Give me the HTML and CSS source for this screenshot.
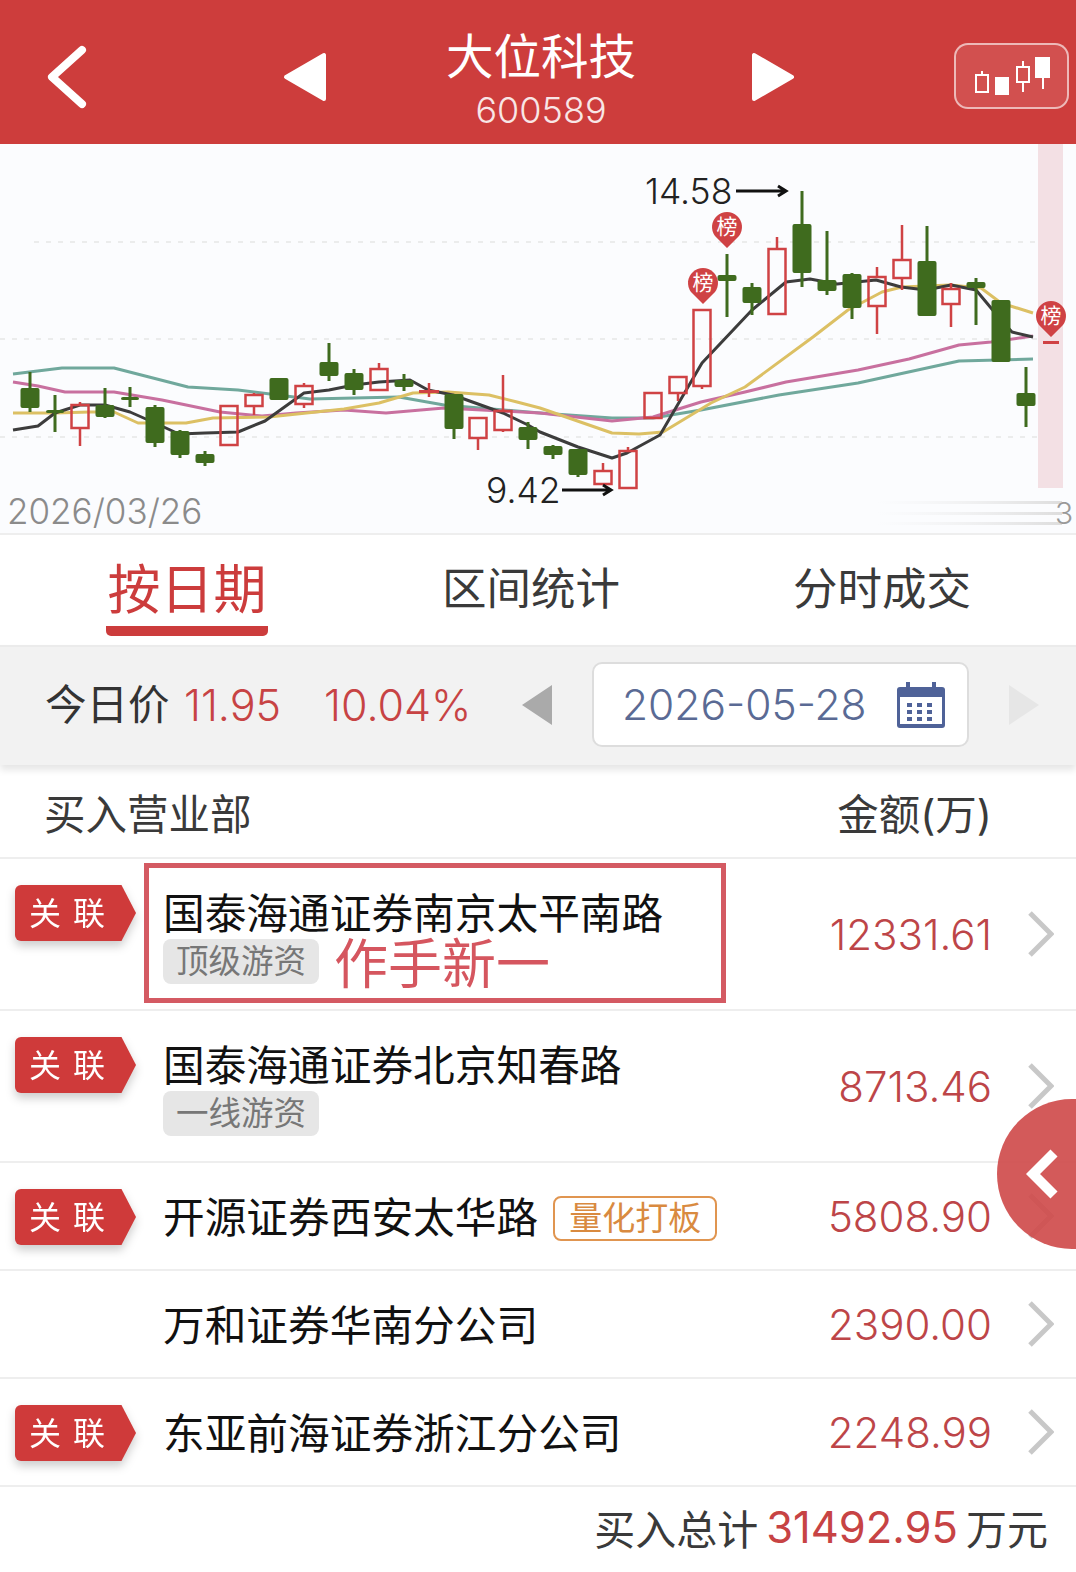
FILE: index.html
```html
<!DOCTYPE html>
<html lang="zh-CN">
<head>
  <meta charset="UTF-8" />
  <title>大位科技 600589</title>
  <link rel="stylesheet" href="styles.css">
</head>
<body>
<div class="page">

  <!-- Top bar -->
  <header class="topbar">
    <svg class="back" width="48" height="66" viewBox="0 0 48 66"><path d="M38 6 8 33l30 27" /></svg>
    <svg class="prev" width="44" height="50" viewBox="0 0 44 50"><path d="M41 3v44L3 25z" /></svg>
    <div class="title">
      <div class="title-name">大位科技</div>
      <div class="title-code">600589</div>
    </div>
    <svg class="next" width="44" height="50" viewBox="0 0 44 50"><path d="M3 3v44l38-22z" /></svg>
    <div class="kline-btn">
      <svg width="111" height="62" viewBox="0 0 111 62">
        <g class="kl-line">
          <rect x="20" y="30" width="12" height="17" />
          <rect x="61" y="22" width="12" height="15" />
          <path d="M26 26v4M67 16v6M67 37v10M87 30v14" />
        </g>
        <path class="kl-fill" d="M39 32h14v18H39zM79 12h15v21H79z" />
      </svg>
    </div>
  </header>

  <!-- K line chart -->
  <section class="chart">
    <svg width="1076" height="389" viewBox="0 144 1076 389">
      <defs>
        <linearGradient id="smear" x1="0" x2="1" y1="0" y2="0">
          <stop offset="0" stop-color="#eeeeee" stop-opacity="0" />
          <stop offset="1" stop-color="#dddddd" />
        </linearGradient>
      </defs>
      <rect class="band" x="1038" y="144" width="25" height="344" />

      <path class="grid" d="M34 242H1038M0 339H1038M0 437H1038" />

      <polyline class="ma teal" points="13,374 62,368 114,368 188,387 238,390 310,399 399,397 444,405 540,413 612,418 653,418 701,410 779,395 858,383 959,361 1033,359" />
      <polyline class="ma pink" points="13,382 38,386 65,392 114,392 162,400 220,412 262,416 296,413 344,410 386,413 444,408 540,413 612,421 653,417 701,402 745,392 786,382 858,370 909,359 959,345 991,342 1033,336" />
      <polyline class="ma yellow" points="13,413 55,413 90,412 114,412 138,423 186,423 213,418 269,417 344,409 379,403 413,393 448,392 489,395 517,402 540,408 612,433 639,434 663,432 711,403 745,387 813,337 848,310 882,292 902,287 950,285 981,288 1001,303 1033,313" />
      <polyline class="ma black" points="13,430 38,426 55,413 80,405 105,405 130,412 155,423 179,434 205,433 238,432 265,421 304,393 329,390 354,385 379,382 410,380 428,390 453,395 503,413 528,425 540,432 578,447 612,458 627,453 660,435 702,363 752,310 786,282 810,279 837,284 876,280 901,287 926,290 951,285 976,290 1001,320 1012,332 1033,337" />

      <!-- falling days -->
      <path class="wick-dn" d="M30 372V412M55 395V432M105 388V418M130 387V407M155 405V447M180 430V458M205 451V466M329 343V381M354 369V395M404 374V391M454 394V439M528 422V449M553 445V459M578 449V477M727 254V317M752 283V315M802 191V287M827 231V295M852 273V319M927 226V316M976 278V325M1026 367V427" />
      <g class="body-dn">
        <rect x="20.5" y="388" width="19" height="20" />
        <rect x="46" y="410" width="18" height="3" />
        <rect x="95.5" y="405" width="19" height="12" />
        <rect x="121" y="397" width="18" height="3" />
        <rect x="145.5" y="407" width="19" height="36" />
        <rect x="170.5" y="431" width="19" height="24" />
        <rect x="195.5" y="454" width="19" height="9" />
        <rect x="269.5" y="378" width="19" height="22" />
        <rect x="319.5" y="362" width="19" height="14" />
        <rect x="344.5" y="373" width="19" height="17" />
        <rect x="394.5" y="380" width="19" height="7" />
        <rect x="444.5" y="394" width="19" height="35" />
        <rect x="518.5" y="427" width="19" height="13" />
        <rect x="543.5" y="446" width="19" height="9" />
        <rect x="568.5" y="449" width="19" height="26" />
        <rect x="717.5" y="275" width="19" height="6" />
        <rect x="742.5" y="287" width="19" height="16" />
        <rect x="792.5" y="224" width="19" height="49" />
        <rect x="817.5" y="280" width="19" height="11" />
        <rect x="842.5" y="274" width="19" height="34" />
        <rect x="917.5" y="261" width="19" height="55" />
        <rect x="966.5" y="282" width="19" height="6" />
        <rect x="991.5" y="300" width="19" height="62" />
        <rect x="1016.5" y="393" width="19" height="13" />
      </g>

      <!-- rising days -->
      <path class="wick-up" d="M80 402V405M80 428V446M254 393V395M254 406V415M304 383V386M304 404V408M379 363V369M429 383V397M478 438V450M503 375V411M503 430V432M603 463V471M628 447V451M678 393V401M702 386V389M777 237V249M877 267V277M877 306V334M902 225V260M902 278V290M951 283V289M951 304V327" />
      <g class="body-up">
        <rect x="71.5" y="405" width="17" height="23" />
        <rect x="220.5" y="406" width="17" height="39" />
        <rect x="245.5" y="395" width="17" height="11" />
        <rect x="295.5" y="386" width="17" height="18" />
        <rect x="370.5" y="369" width="17" height="21" />
        <rect x="469.5" y="418" width="17" height="20" />
        <rect x="494.5" y="411" width="17" height="19" />
        <rect x="594.5" y="471" width="17" height="13" />
        <rect x="619.5" y="451" width="17" height="37" />
        <rect x="644.5" y="393" width="17" height="25" />
        <rect x="669.5" y="377" width="17" height="16" />
        <rect x="693.5" y="310" width="17" height="76" />
        <rect x="768.5" y="249" width="17" height="65" />
        <rect x="868.5" y="277" width="17" height="29" />
        <rect x="893.5" y="260" width="17" height="18" />
        <rect x="942.5" y="289" width="17" height="15" />
      </g>
      <rect class="flat-up" x="419" y="390" width="20" height="3" />
      <rect class="flat-up" x="1043" y="341" width="16" height="3" />

      <path class="pin" d="M727 248l-12-12a15 15 0 1 1 24 0z" />
      <path class="pin" d="M703 304l-12-12a15 15 0 1 1 24 0z" />
      <path class="pin" d="M1051 337l-12-12a15 15 0 1 1 24 0z" />
      <text class="pin-text" x="727" y="234">榜</text>
      <text class="pin-text" x="703" y="290">榜</text>
      <text class="pin-text" x="1051" y="323">榜</text>

      <text class="price" x="645" y="204">14.58</text>
      <path class="arrow" d="M736 191H786M778 186l8 5-8 5" />
      <text class="price" x="486" y="503">9.42</text>
      <path class="arrow" d="M562 490H611M603 485l8 5-8 5" />

      <text class="axis-date" x="7" y="524">2026/03/26</text>
      <rect x="877" y="501" width="185" height="3" fill="url(#smear)" />
      <rect x="877" y="512" width="185" height="3" fill="url(#smear)" />
      <rect x="877" y="522" width="185" height="3" fill="url(#smear)" />
      <text class="axis-cut" x="1055" y="524">3</text>
    </svg>
  </section>

  <!-- Tabs -->
  <nav class="tabs">
    <div class="tab tab-active">按日期</div>
    <div class="tab tab-mid">区间统计</div>
    <div class="tab tab-last">分时成交</div>
  </nav>

  <!-- Date bar -->
  <div class="datebar">
    <span class="today-label">今日价</span>
    <span class="today-price">11.95</span>
    <span class="today-pct">10.04%</span>
    <svg class="date-prev" width="30" height="40" viewBox="0 0 30 40"><path d="M30 0v40L0 20z" /></svg>
    <div class="date-box">
      <span class="date-text">2026-05-28</span>
      <svg width="48" height="46" viewBox="0 0 48 46">
        <path class="cal-body" d="M3 5h42a3 3 0 0 1 3 3v35a3 3 0 0 1-3 3H3a3 3 0 0 1-3-3V8a3 3 0 0 1 3-3z" />
        <rect x="3" y="15" width="42" height="27" fill="#fff" />
        <path class="cal-ring" d="M11 0v9M37 0v9" />
        <path class="cal-dots" d="M10 21h5v4h-5zM20 21h5v4h-5zM30 21h5v4h-5zM10 28h5v4h-5zM20 28h5v4h-5zM30 28h5v4h-5zM10 35h5v4h-5zM20 35h5v4h-5zM30 35h5v4h-5z" />
      </svg>
    </div>
    <svg class="date-next" width="30" height="40" viewBox="0 0 30 40"><path d="M0 0v40l30-20z" /></svg>
  </div>

  <div class="list-head">
    <span>买入营业部</span>
    <span class="list-head-amt">金额(万)</span>
  </div>

  <!-- Broker rows -->
  <div class="row row-tall">
    <div class="badge-wrap"><div class="badge">关联</div></div>
    <div class="broker">
      <div class="broker-name">国泰海通证券南京太平南路</div>
      <div class="broker-tags">
        <span class="tag">顶级游资</span>
        <span class="note">作手新一</span>
      </div>
    </div>
    <div class="amount">12331.61</div>
    <svg class="chev" width="26" height="46" viewBox="0 0 26 46"><path d="M2 2l21 21L2 44" /></svg>
    <div class="mark-box"></div>
  </div>

  <div class="row row-tall">
    <div class="badge-wrap"><div class="badge">关联</div></div>
    <div class="broker">
      <div class="broker-name">国泰海通证券北京知春路</div>
      <div class="broker-tags">
        <span class="tag">一线游资</span>
      </div>
    </div>
    <div class="amount">8713.46</div>
    <svg class="chev" width="26" height="46" viewBox="0 0 26 46"><path d="M2 2l21 21L2 44" /></svg>
  </div>

  <div class="row">
    <div class="badge-wrap"><div class="badge">关联</div></div>
    <div class="broker broker-inline">
      <div class="broker-name">开源证券西安太华路</div>
      <span class="tag-orange">量化打板</span>
    </div>
    <div class="amount">5808.90</div>
    <svg class="chev" width="26" height="46" viewBox="0 0 26 46"><path d="M2 2l21 21L2 44" /></svg>
  </div>

  <div class="row">
    <div class="badge-none"></div>
    <div class="broker">
      <div class="broker-name">万和证券华南分公司</div>
    </div>
    <div class="amount">2390.00</div>
    <svg class="chev" width="26" height="46" viewBox="0 0 26 46"><path d="M2 2l21 21L2 44" /></svg>
  </div>

  <div class="row">
    <div class="badge-wrap"><div class="badge">关联</div></div>
    <div class="broker">
      <div class="broker-name">东亚前海证券浙江分公司</div>
    </div>
    <div class="amount">2248.99</div>
    <svg class="chev" width="26" height="46" viewBox="0 0 26 46"><path d="M2 2l21 21L2 44" /></svg>
  </div>

  <div class="total">
    <span>买入总计</span>
    <span class="total-num">31492.95</span>
    <span>万元</span>
  </div>

  <!-- Floating collapse button -->
  <div class="fab">
    <svg width="34" height="50" viewBox="0 0 34 50"><path d="M28 4 7 25l21 21" /></svg>
  </div>
</div>
</body>
</html>
```

FILE: styles.css
```css
body {
  margin: 0;
  background: #fff;
  font-family: Inter, "Noto Sans CJK SC", "Noto Sans", sans-serif;
  color: #333;
}

.page {
  position: relative;
  width: 1076px;
  height: 1572px;
  overflow: hidden;
}

/* Top bar */
.topbar {
  height: 144px;
  padding-top: 10px;
  box-sizing: border-box;
  background: #cd3d3c;
  display: grid;
  grid-template-columns: 283px 44px 424px 44px 1fr;
  align-items: center;
  color: #fff;
}

.back {
  margin-left: 44px;
  fill: none;
  stroke: #fff;
  stroke-width: 8;
  stroke-linecap: round;
  stroke-linejoin: round;
}

.prev, .next {
  fill: #fff;
  stroke: #fff;
  stroke-width: 4;
  stroke-linejoin: round;
}

.title {
  text-align: center;
  padding-left: 4px;
}

.title-name {
  font-size: 47.5px;
  line-height: 52px;
  margin-top: 8px;
}

.title-code {
  font-size: 36px;
  font-weight: 300;
  line-height: 44px;
  margin-top: 5px;
  color: #f8e6e6;
}

.kline-btn {
  justify-self: end;
  margin-right: 7px;
  margin-top: -2px;
  width: 115px;
  height: 66px;
  box-sizing: border-box;
  border: 2px solid rgba(255, 255, 255, 0.6);
  border-radius: 14px;
  background: rgba(255, 255, 255, 0.1);
}

.kline-btn svg {
  display: block;
}

.kl-line {
  fill: none;
  stroke: #fff;
  stroke-width: 2;
}

.kl-fill {
  fill: #fff;
}

/* Chart */
.chart {
  height: 389px;
  background: #fbfcfe;
}

.chart svg {
  display: block;
}

.band {
  fill: #f3e0e4;
}

.grid {
  fill: none;
  stroke: #e6e6e6;
  stroke-width: 1.5;
  stroke-dasharray: 5 7;
}

.ma {
  fill: none;
  stroke-width: 3;
  stroke-linejoin: round;
}

.teal { stroke: #70a89c; }
.pink { stroke: #c8709f; }
.yellow { stroke: #dcc064; }
.black { stroke: #3c3c3c; }

.wick-dn {
  fill: none;
  stroke: #3f6b1e;
  stroke-width: 3;
}

.body-dn rect {
  fill: #3f6b1e;
  rx: 2px;
}

.wick-up {
  fill: none;
  stroke: #cf4244;
  stroke-width: 2.5;
}

.body-up rect {
  fill: none;
  stroke: #cf4244;
  stroke-width: 2.5;
}

.flat-up {
  fill: #cf4244;
}

.pin {
  fill: #cf4244;
}

.pin-text {
  fill: #fff;
  font-size: 21px;
  text-anchor: middle;
}

.price {
  fill: #222;
  font-size: 35.5px;
  font-weight: 300;
}

.arrow {
  fill: none;
  stroke: #111;
  stroke-width: 3;
}

.axis-date {
  fill: #8b8b8b;
  font-size: 35px;
  font-weight: 300;
}

.axis-cut {
  fill: #999;
  font-size: 30px;
  font-weight: 300;
}

/* Tabs */
.tabs {
  height: 112px;
  border-top: 2px solid #eeeeee;
  box-sizing: border-box;
  display: grid;
  grid-template-columns: 395px 350px 1fr;
  align-items: center;
  padding-left: 106px;
}

.tab {
  font-size: 44.5px;
  line-height: 50px;
  color: #3a3a3a;
}

.tab-active {
  width: 162px;
  text-align: center;
  font-size: 53px;
  line-height: 66px;
  color: #cc3c3c;
  border-bottom: 10px solid #cc3c3c;
  border-radius: 5px;
  padding-bottom: 3px;
  margin-top: 13px;
}

.tab-mid {
  margin-left: -59px;
  padding-bottom: 2px;
}

.tab-last {
  margin-left: -58px;
  padding-bottom: 2px;
}

/* Date bar */
.datebar {
  height: 120px;
  background: #f2f2f2;
  box-shadow: 0 5px 7px rgba(0, 0, 0, 0.1);
  border-top: 2px solid #ebebeb;
  box-sizing: border-box;
  display: flex;
  align-items: center;
  padding: 0 0 3px 45px;
  position: relative;
}

.today-label {
  font-size: 41.5px;
  width: 139px;
  padding-bottom: 5px;
}

.today-price, .today-pct {
  font-size: 43px;
  font-weight: 350;
  color: #c74344;
}

.today-price {
  width: 140px;
}

.today-pct {
  width: 198px;
}

.date-prev {
  fill: #aaaaaa;
}

.date-box {
  width: 377px;
  height: 85px;
  margin-left: 40px;
  box-sizing: border-box;
  background: #fff;
  border: 2px solid #dddddd;
  border-radius: 10px;
  display: flex;
  align-items: center;
  padding-left: 28px;
  gap: 28px;
}

.date-text {
  font-size: 42.5px;
  font-weight: 350;
  color: #5a6a94;
  width: 247px;
  white-space: nowrap;
}

.date-box svg {
  flex: none;
}

.cal-body { fill: #4f6298; }
.cal-ring { stroke: #4f6298; stroke-width: 4; fill: none; }
.cal-dots { fill: #4f6298; }

.date-next {
  margin-left: 40px;
  fill: #e6e6e6;
}

/* List */
.list-head {
  height: 94px;
  box-sizing: border-box;
  padding: 2px 84px 0 44px;
  display: flex;
  justify-content: space-between;
  align-items: center;
  font-size: 41.5px;
  color: #3a3a3a;
  border-bottom: 2px solid #eeeeee;
}

.row {
  position: relative;
  height: 108px;
  box-sizing: border-box;
  border-bottom: 2px solid #eeeeee;
  display: flex;
  align-items: flex-start;
}

.row-tall {
  height: 152px;
}

.badge-wrap {
  width: 121px;
  height: 56px;
  margin: 26px 0 0 15px;
  filter: drop-shadow(0 5px 5px rgba(0, 0, 0, 0.2));
  flex: none;
}

.badge {
  height: 56px;
  background: #cf3a3a;
  color: #fff;
  border-radius: 6px 0 0 6px;
  clip-path: polygon(0 0, 88% 0, 100% 50%, 88% 100%, 0 100%);
  font-size: 32px;
  line-height: 57px;
  letter-spacing: 12px;
  padding-left: 14px;
  box-sizing: border-box;
}

.badge-none {
  width: 136px;
  flex: none;
}

.broker {
  margin: 27px 0 0 27px;
  flex: 1;
  color: #111;
}

.broker-inline {
  display: flex;
  align-items: center;
  gap: 15px;
}

.broker-name {
  font-size: 41.7px;
  line-height: 56px;
  white-space: nowrap;
}

.broker-tags {
  display: flex;
  align-items: flex-start;
  height: 45px;
  margin-top: -3px;
  gap: 15px;
}

.tag {
  background: #e6e6e6;
  color: #777;
  font-size: 32.5px;
  line-height: 45px;
  padding: 0 13px;
  border-radius: 8px;
}

.tag-orange {
  border: 2px solid #e09550;
  color: #d98a40;
  font-size: 33px;
  line-height: 41px;
  padding: 0 14px;
  border-radius: 8px;
}

.note {
  font-size: 54px;
  line-height: 52px;
  color: #d5565f;
}

.amount {
  align-self: center;
  padding-top: 1px;
  font-size: 42px;
  font-weight: 350;
  color: #bd4548;
  white-space: nowrap;
}

.chev {
  align-self: center;
  flex: none;
  margin: 0 22px 0 36px;
  fill: none;
  stroke: #c8c8c8;
  stroke-width: 5;
}

.mark-box {
  position: absolute;
  left: 144px;
  top: 4px;
  width: 582px;
  height: 140px;
  box-sizing: border-box;
  border: 5px solid #d45a63;
}

.total {
  height: 85px;
  box-sizing: border-box;
  padding: 0 28px 5px 0;
  display: flex;
  justify-content: flex-end;
  align-items: center;
  gap: 8px;
  font-size: 41px;
  color: #3a3a3a;
}

.total-num {
  font-size: 43.5px;
  color: #c74344;
}

.fab {
  position: absolute;
  left: 997px;
  top: 1099px;
  width: 150px;
  height: 150px;
  border-radius: 50%;
  background: rgba(207, 76, 76, 0.92);
  display: flex;
  align-items: center;
  padding-left: 29px;
  box-sizing: border-box;
}

.fab path {
  fill: none;
  stroke: #fff;
  stroke-width: 10;
}
```
